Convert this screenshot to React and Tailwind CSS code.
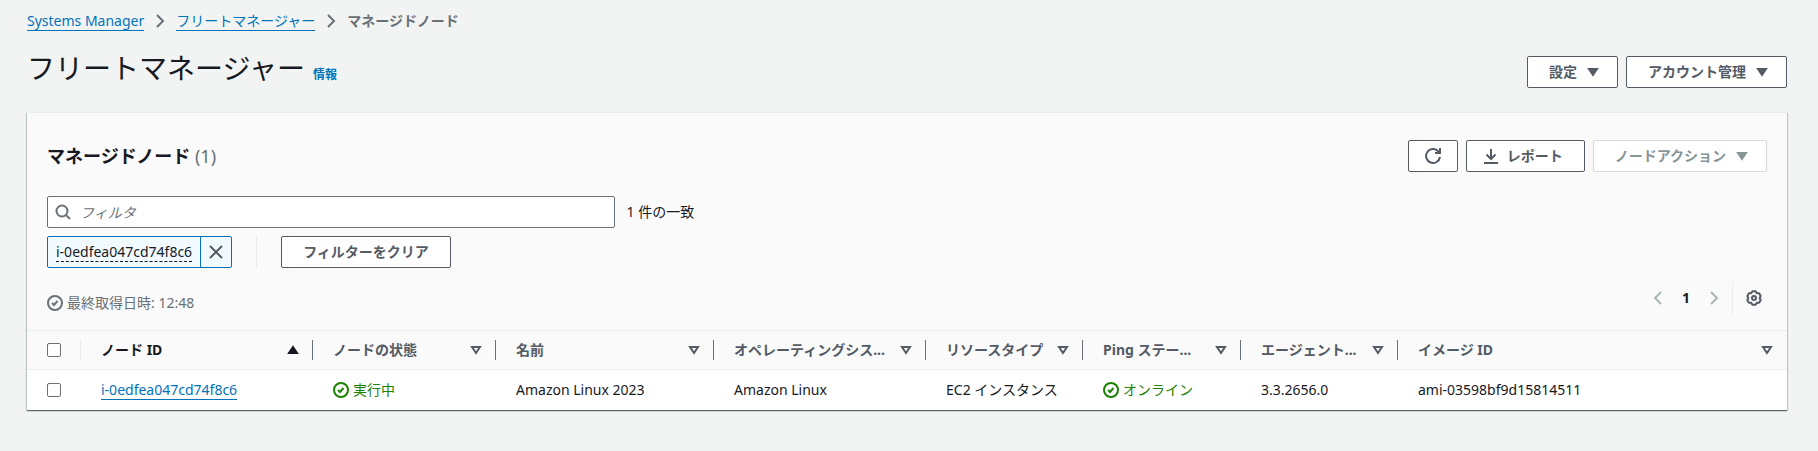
import React, { useState } from 'react';

const columns = [
  { key: 'id', label: 'ノード ID', width: 'w-[232px]', sorted: true },
  { key: 'state', label: 'ノードの状態', width: 'w-[183px]' },
  { key: 'name', label: '名前', width: 'w-[218px]' },
  { key: 'os', label: 'オペレーティングシス...', width: 'w-[212px]' },
  { key: 'type', label: 'リソースタイプ', width: 'w-[157px]' },
  { key: 'ping', label: 'Ping ステー...', width: 'w-[158px]' },
  { key: 'agent', label: 'エージェント...', width: 'w-[157px]' },
  { key: 'image', label: 'イメージ ID', width: '' },
];

const nodes = [
  {
    id: 'i-0edfea047cd74f8c6',
    state: '実行中',
    name: 'Amazon Linux 2023',
    os: 'Amazon Linux',
    type: 'EC2 インスタンス',
    ping: 'オンライン',
    agent: '3.3.2656.0',
    image: 'ami-03598bf9d15814511',
  },
];

function Icon({ children, className = '' }) {
  return (
    <svg
      viewBox="0 0 16 16"
      className={`size-4 shrink-0 ${className}`}
      fill="none"
      stroke="currentColor"
      strokeWidth="2"
      aria-hidden="true"
    >
      {children}
    </svg>
  );
}

const ChevronRight = ({ className }) => (
  <Icon className={className}><path d="M5 2l6 6-6 6" /></Icon>
);

const ChevronLeft = ({ className }) => (
  <Icon className={className}><path d="M11 2L5 8l6 6" /></Icon>
);

const CaretDown = () => (
  <Icon><path d="M4 5h8l-4 6z" fill="currentColor" /></Icon>
);

const CaretUp = () => (
  <Icon><path d="M4 11h8L8 5z" fill="currentColor" /></Icon>
);

const CaretDownOutline = () => (
  <Icon><path d="M4 5h8l-4 6z" /></Icon>
);

const CheckCircle = ({ className }) => (
  <Icon className={className}>
    <circle cx="8" cy="8" r="7" />
    <path d="M5 8l2 2 3.5-4" />
  </Icon>
);

const Refresh = () => (
  <Icon>
    <path d="M15 9a7 7 0 1 1-2-6l2 2" />
    <path d="M15 0v5h-5" />
  </Icon>
);

const Download = () => (
  <Icon>
    <path d="M1 15h14M8 1v10M3.5 6.5L8 11l4.5-4.5" />
  </Icon>
);

const Search = ({ className }) => (
  <Icon className={className}>
    <circle cx="7" cy="7" r="5.5" />
    <path d="M15 15l-4-4" />
  </Icon>
);

const Close = () => (
  <Icon><path d="M2 2l12 12M14 2L2 14" /></Icon>
);

const Gear = () => (
  <Icon>
    <path
      d="M6.400 1.200h3.200l1.200 1.950 2.300.05 1.600 2.800L13.600 8l1.100 2-1.600 2.800-2.300.05-1.200 1.950H6.400l-1.200-1.950-2.300-.05L1.300 10l1.100-2-1.100-2 1.600-2.800 2.300-.05z"
      strokeLinejoin="round"
    />
    <circle cx="8" cy="8" r="2" />
  </Icon>
);

function Button({ children, padding = 'px-[21px]', ...props }) {
  return (
    <button
      type="button"
      className={`flex h-8 items-center gap-2 rounded-xs border border-[#545b64] bg-white font-bold text-[#545b64] disabled:border-[#d5dbdb] disabled:text-[#879596] ${padding}`}
      {...props}
    >
      {children}
    </button>
  );
}

function Breadcrumbs() {
  return (
    <nav aria-label="Breadcrumbs">
      <ol className="flex items-center gap-2">
        <li><a href="#" className="border-b border-[#0073bb] text-[#0073bb]">Systems Manager</a></li>
        <ChevronRight className="text-[#687078]" />
        <li><a href="#" className="border-b border-[#0073bb] text-[#0073bb]">フリートマネージャー</a></li>
        <ChevronRight className="text-[#687078]" />
        <li className="font-bold text-[#687078]">マネージドノード</li>
      </ol>
    </nav>
  );
}

function Cell({ column, node }) {
  const value = node[column];

  if (column === 'id') {
    return <a href="#" className="border-b border-[#0073bb] text-[#0073bb]">{value}</a>;
  }
  if (column === 'state' || column === 'ping') {
    return (
      <span className="flex items-center gap-1 text-[#1d8102]">
        <CheckCircle />
        {value}
      </span>
    );
  }
  return value;
}

function NodeTable() {
  const [selected, setSelected] = useState([]);
  const allSelected = selected.length === nodes.length;

  const toggle = (id) => {
    setSelected((prev) => (prev.includes(id) ? prev.filter((s) => s !== id) : [...prev, id]));
  };

  const checkbox = 'block size-3.5 appearance-none rounded-xs border border-[#687078] bg-white checked:bg-[#0073bb]';

  return (
    <table className="w-full table-fixed border-collapse text-left">
      <thead>
        <tr className="h-[39px] border-y border-[#eaeded]">
          <th className="w-[54px] p-0">
            <div className="flex h-5 items-center border-r border-[#eaeded] pl-5">
              <input
                type="checkbox"
                aria-label="すべて選択"
                className={checkbox}
                checked={allSelected}
                onChange={() => setSelected(allSelected ? [] : nodes.map((n) => n.id))}
              />
            </div>
          </th>
          {columns.map((col, index) => (
            <th key={col.key} className={`p-0 ${col.width}`}>
              <div
                className={`flex h-5 items-center justify-between pl-5 whitespace-nowrap ${
                  index < columns.length - 1 ? 'border-r border-[#687078] pr-[11px]' : 'pr-3'
                } ${col.sorted ? 'text-[#16191f]' : 'text-[#545b64]'}`}
              >
                <span>{col.label}</span>
                {col.sorted ? <CaretUp /> : <CaretDownOutline />}
              </div>
            </th>
          ))}
        </tr>
      </thead>
      <tbody className="bg-white">
        {nodes.map((node) => (
          <tr key={node.id} className="h-10">
            <td className="p-0 pl-5">
              <input
                type="checkbox"
                aria-label={node.id}
                className={checkbox}
                checked={selected.includes(node.id)}
                onChange={() => toggle(node.id)}
              />
            </td>
            {columns.map((col) => (
              <td key={col.key} className="p-0 pl-5 whitespace-nowrap">
                <Cell column={col.key} node={node} />
              </td>
            ))}
          </tr>
        ))}
      </tbody>
    </table>
  );
}

export default function App() {
  const [filter, setFilter] = useState('');

  return (
    <div className="min-h-screen bg-[#f2f3f3] pt-2.5 pr-[31px] pb-10 pl-[27px] font-['Noto_Sans','Noto_Sans_CJK_JP',sans-serif] text-sm leading-[22px] text-[#16191f]">
      <Breadcrumbs />

      <header className="mt-4 mb-6 flex items-end justify-between">
        <div className="flex items-baseline gap-2">
          <h1 className="text-[28px] leading-10">フリートマネージャー</h1>
          <a href="#" className="text-xs font-bold text-[#0073bb]">情報</a>
        </div>
        <div className="flex gap-2">
          <Button padding="pr-4 pl-[21px]">設定<CaretDown /></Button>
          <Button padding="pr-4 pl-[21px]">アカウント管理<CaretDown /></Button>
        </div>
      </header>

      <main className="border-t border-[#eaeded] bg-[#fafafa] shadow-[0_1px_1px_0_rgba(0,28,36,0.5),1px_1px_1px_0_rgba(0,28,36,0.15),-1px_1px_1px_0_rgba(0,28,36,0.15)]">
        <div className="px-5 pt-[27px]">
          <div className="flex items-center justify-between">
            <h2 className="text-lg leading-7 font-bold">
              マネージドノード <span className="font-normal text-[#687078]">(1)</span>
            </h2>
            <div className="flex gap-2">
              <Button padding="px-4" aria-label="更新"><Refresh /></Button>
              <Button padding="pr-[21px] pl-4"><Download />レポート</Button>
              <Button padding="pr-4 pl-[21px]" disabled>ノードアクション<CaretDown /></Button>
            </div>
          </div>

          <div className="mt-6 flex items-center gap-3">
            <div className="relative w-[33%]">
              <Search className="absolute top-2 left-2 text-[#687078]" />
              <input
                type="text"
                aria-label="フィルタ"
                placeholder="フィルタ"
                value={filter}
                onChange={(e) => setFilter(e.target.value)}
                className="block h-8 w-full rounded-xs border border-[#687078] bg-white pr-2 pl-8 placeholder:text-[#687078] placeholder:italic"
              />
            </div>
            <span>1 件の一致</span>
          </div>

          <div className="mt-2 flex">
            <div className="flex h-8 items-center rounded-xs border border-[#0073bb] bg-[#f1faff]">
              <button type="button" className="px-2">
                <span className="border-b border-dashed border-[#16191f]">i-0edfea047cd74f8c6</span>
              </button>
              <button type="button" aria-label="フィルターを削除" className="flex h-full items-center border-l border-[#0073bb] px-[7px] text-[#545b64]">
                <Close />
              </button>
            </div>
            <div className="mx-6 border-r border-[#eaeded]" />
            <Button>フィルターをクリア</Button>
          </div>

          <div className="mt-3 flex items-start justify-between pb-4">
            <div className="flex items-center gap-1 pt-3 text-[#687078]">
              <CheckCircle />
              最終取得日時: 12:48
            </div>
            <div className="flex items-center pt-0.5">
              <button type="button" disabled aria-label="前のページ" className="text-[#aab7b8]"><ChevronLeft /></button>
              <button type="button" className="w-10 text-center font-bold">1</button>
              <button type="button" disabled aria-label="次のページ" className="text-[#aab7b8]"><ChevronRight /></button>
              <div className="ml-2.5 h-8 border-r border-[#eaeded]" />
              <button type="button" aria-label="設定" className="pr-[5px] pl-[13px] text-[#545b64]"><Gear /></button>
            </div>
          </div>
        </div>

        <NodeTable />
      </main>
    </div>
  );
}
